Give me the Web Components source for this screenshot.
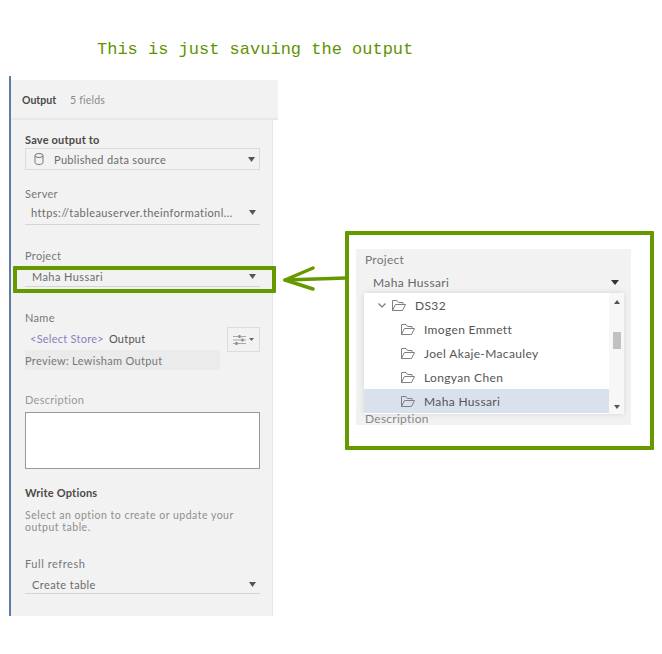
<!DOCTYPE html>
<html>
<head>
<meta charset="utf-8">
<style>
  html, body { margin: 0; padding: 0; background: #fff; }
  body { width: 662px; height: 654px; overflow: hidden; font-family: Lato, "Liberation Sans", sans-serif; font-size: 11px; color: #666; }
  #page { position: relative; width: 662px; height: 654px; }
</style>
</head>
<body>
<div id="page">
  <note-title>This is just savuing the output</note-title>
  <div style="display:flex;align-items:flex-start">
    <output-panel></output-panel>
    <project-callout></project-callout>
  </div>
  <green-arrow></green-arrow>
</div>

<script>
const ARROW = `<svg width="7" height="5" viewBox="0 0 7 5" style="display:block"><path d="M0 0H7L3.5 5Z" fill="#555"/></svg>`;

class NoteTitle extends HTMLElement {
  constructor() {
    super();
    this.attachShadow({ mode: 'open' }).innerHTML = `
      <style>
        :host { display: block; height: 76px; box-sizing: border-box; padding: 40px 0 0 97px;
          font-family: "Liberation Mono", monospace; font-size: 17px; line-height: 20px; color: #5f9400; }
      </style><slot></slot>`;
  }
}

// dropdown row: label text + caret, with optional underline or box
class TabSelect extends HTMLElement {
  constructor() {
    super();
    this.attachShadow({ mode: 'open' }).innerHTML = `
      <style>
        :host { display: flex; align-items: center; box-sizing: border-box; height: 22px; padding: 0 4px 0 7px;
          border-bottom: 1px solid #d4d4d4; color: #6b6b6b; font-size: 11px; }
        :host([boxed]) { height: 22px; border: 1px solid #dcdcdc; padding: 0 4px 0 8px; }
        .txt { flex: 1; white-space: nowrap; overflow: hidden; letter-spacing: .42px; }
        :host([boxed]) .txt { letter-spacing: .32px; }
        ::slotted(svg) { margin-right: 10px; }
      </style>
      <slot name="icon"></slot>
      <span class="txt"><slot></slot></span>${ARROW}`;
  }
}

class OutputPanel extends HTMLElement {
  constructor() {
    super();
    this.attachShadow({ mode: 'open' }).innerHTML = `
      <style>
        :host { display: block; width: 269px; height: 540px; margin-left: 9px; box-sizing: border-box;
          border-left: 2px solid #5f7ba6; padding-top: 4px; font-size: 11px; color: #666; }
        header { height: 40px; box-sizing: border-box; background: #f2f2f2; border-bottom: 2px solid #e8e8e8;
          display: flex; align-items: center; padding: 2px 0 0 11px; width: 267px; }
        header b { color: #4a4a4a; font-size: 10.5px; margin-right: 14px; }
        header span { color: #8a8a8a; font-size: 10.5px; letter-spacing: .2px; }
        .body { width: 262px; height: 496px; box-sizing: border-box; background: #f2f2f2; border-right: 1px solid #e6e6e6;
          padding: 13px 12px 0 14px; display: flex; flex-direction: column; }
        label { display: block; line-height: 14px; color: #777; letter-spacing: .3px; }
        h4 { margin: 0; font-size: 11px; line-height: 14px; color: #4a4a4a; font-weight: 700; letter-spacing: .2px; }
        .name { display: flex; gap: 7px; margin-top: 2px; }
        .namecol { width: 195px; }
        .nameline { height: 23px; display: flex; align-items: center; padding-left: 5px; color: #555; letter-spacing: .25px; }
        .nameline i { font-style: normal; color: #8d7fbb; margin-right: 5px; }
        .preview { height: 20px; background: #ebebeb; line-height: 21px; color: #777; letter-spacing: .32px; }
        .btn { width: 33px; height: 25px; box-sizing: border-box; border: 1px solid #dcdcdc; display: flex; align-items: center; justify-content: center; gap: 3px; }
        .area { height: 57px; box-sizing: border-box; background: #fff; border: 1px solid #999; margin-top: 5px; }
        p { margin: 9px 0 0; line-height: 12px; color: #8f8f8f; font-size: 10.5px; letter-spacing: .5px; }
        .hl { position: absolute; left: 13px; top: 266px; width: 263px; height: 27px; box-sizing: border-box; border: 4px solid #669900; border-radius: 1px; }
      </style>
      <header><b>Output</b><span>5 fields</span></header>
      <div class="body">
        <h4>Save output to</h4>
        <tab-select boxed style="margin-top:1px">
          <svg slot="icon" width="10" height="12" viewBox="0 0 10 12" fill="none" stroke="#777"><ellipse cx="5" cy="2.5" rx="4" ry="2"/><path d="M1 2.5V9.5C1 10.6 2.8 11.5 5 11.5S9 10.6 9 9.5V2.5"/></svg>
          Published data source
        </tab-select>
        <label style="margin-top:17px">Server</label>
        <tab-select style="margin-top:2px;padding-left:6px;padding-bottom:2px">https://tableauserver.theinformationl...</tab-select>
        <label style="margin-top:24px">Project</label>
        <tab-select style="margin-top:2px;padding-top:1px">Maha Hussari</tab-select>
        <label style="margin-top:24px">Name</label>
        <div class="name">
          <div class="namecol">
            <div class="nameline"><i>&lt;Select Store&gt;</i> Output</div>
            <div class="preview">Preview: Lewisham Output</div>
          </div>
          <div class="btn">
            <svg width="13" height="10" viewBox="0 0 13 10" stroke="#888"><path d="M0 1.5H13M0 5H13M0 8.5H13" stroke-width=".7"/><path d="M6.5 0V3M9.5 3.5V6.5M3.5 7V10" stroke-width="2"/></svg>
            <svg width="5" height="3" viewBox="0 0 5 3"><path d="M0 0H5L2.5 3Z" fill="#666"/></svg>
          </div>
        </div>
        <label style="margin-top:23px;color:#999">Description</label>
        <div class="area"></div>
        <h4 style="margin-top:17px">Write Options</h4>
        <p>Select an option to create or update your<br>output table.</p>
        <label style="margin-top:24px;letter-spacing:.55px">Full refresh</label>
        <tab-select style="margin-top:1px;padding-top:3px">Create table</tab-select>
      </div>
      <div class="hl"></div>`;
  }
}

class TreeRow extends HTMLElement {
  constructor() {
    super();
    this.attachShadow({ mode: 'open' }).innerHTML = `
      <style>
        :host { display: flex; align-items: center; height: 24px; padding-left: 36px; font-size: 12px; color: #555; letter-spacing: .35px; }
        :host([root]) { padding-left: 14px; }
        :host([selected]) { background: #d9e1ed; }
        svg { margin-right: 9px; flex: none; }
        .chev { margin-right: 5px; display: none; }
        :host([root]) .chev { display: block; }
      </style>
      <svg class="chev" width="8" height="5" viewBox="0 0 8 5" fill="none" stroke="#777" stroke-width="1.2"><path d="M.5 .5L4 4L7.5 .5"/></svg>
      <svg width="15" height="11" viewBox="0 0 15 11" fill="none" stroke="#808080"><path d="M1.5 10.5V.5H6L7.5 2.5H12V4.5M1.5 10.5H11.5L14.5 4.5H4.5L1.5 10.5Z"/></svg>
      <slot></slot>`;
  }
}

class ProjectCallout extends HTMLElement {
  constructor() {
    super();
    this.attachShadow({ mode: 'open' }).innerHTML = `
      <style>
        :host { display: block; box-sizing: border-box; width: 309px; height: 219px; margin: 155px 0 0 67px;
          border: 4px solid #669900; border-radius: 1px; padding: 14px 19px 0 7px; font-size: 12px; color: #666; }
        .card { position: relative; height: 176px; background: #f2f2f2; box-sizing: border-box; padding: 4px 0 0 9px; }
        label { display: block; line-height: 14px; color: #777; letter-spacing: .25px; }
        .val { display: flex; align-items: center; justify-content: space-between; height: 18px; margin-top: 6px; padding: 0 12px 0 8px; letter-spacing: .35px; }
        .drop { position: absolute; left: 8px; top: 44px; width: 260px; height: 121px; background: #fff; display: flex; box-shadow: 0 0 6px rgba(0,0,0,.12); }
        .list { flex: 1; padding-top: 0; }
        .sb { width: 15px; background: #f7f7f7; display: flex; flex-direction: column; align-items: center; justify-content: space-between; padding: 7px 0 5px; box-sizing: border-box; position: relative; }
        .thumb { position: absolute; left: 4px; top: 39px; width: 8px; height: 17px; background: #c1c1c1; }
        .desc { position: absolute; left: 9px; top: 163px; line-height: 14px; color: #888; letter-spacing: .25px; }
      </style>
      <div class="card">
        <label>Project</label>
        <div class="val"><span>Maha Hussari</span><svg width="8" height="5" viewBox="0 0 8 5"><path d="M0 0H8L4 5Z" fill="#333"/></svg></div>
        <div class="desc">Description</div>
        <div class="drop">
          <div class="list">
            <tree-row root>DS32</tree-row>
            <tree-row>Imogen Emmett</tree-row>
            <tree-row>Joel Akaje-Macauley</tree-row>
            <tree-row>Longyan Chen</tree-row>
            <tree-row selected>Maha Hussari</tree-row>
          </div>
          <div class="sb">
            <svg width="6" height="4" viewBox="0 0 6 4"><path d="M0 4H6L3 0Z" fill="#555"/></svg>
            <div class="thumb"></div>
            <svg width="6" height="4" viewBox="0 0 6 4"><path d="M0 0H6L3 4Z" fill="#555"/></svg>
          </div>
        </div>
      </div>`;
  }
}

class GreenArrow extends HTMLElement {
  constructor() {
    super();
    this.attachShadow({ mode: 'open' }).innerHTML = `
      <style>:host { position: absolute; left: 280px; top: 262px; display: block; width: 70px; height: 36px; }</style>
      <svg width="70" height="36" viewBox="0 0 70 36" fill="none" stroke="#669900" stroke-width="3.5" stroke-linecap="round" stroke-linejoin="round">
        <path d="M66 16L5 18"/><path d="M33 6L5 18L33 27"/>
      </svg>`;
  }
}

customElements.define('note-title', NoteTitle);
customElements.define('tab-select', TabSelect);
customElements.define('output-panel', OutputPanel);
customElements.define('tree-row', TreeRow);
customElements.define('project-callout', ProjectCallout);
customElements.define('green-arrow', GreenArrow);
</script>
</body>
</html>
